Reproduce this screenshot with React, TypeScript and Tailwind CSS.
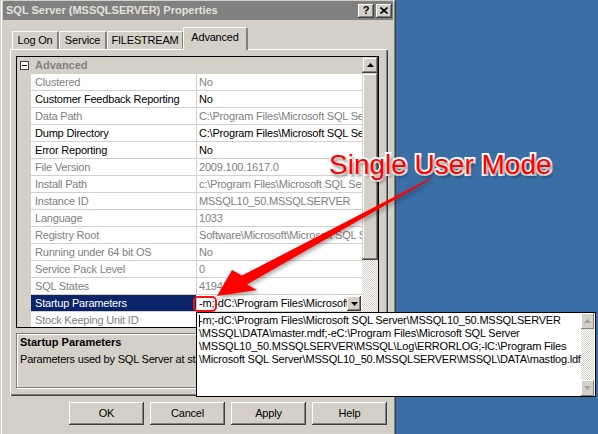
import React from 'react';

type Row = { name: string; value: string; dim?: boolean };

const rows: Row[] = [
  { name: 'Clustered', value: 'No', dim: true },
  { name: 'Customer Feedback Reporting', value: 'No' },
  { name: 'Data Path', value: String.raw`C:\Program Files\Microsoft SQL Server\MSSQL10_50.MSSQLSERVER\MSSQL\DATA`, dim: true },
  { name: 'Dump Directory', value: String.raw`C:\Program Files\Microsoft SQL Server\MSSQL10_50.MSSQLSERVER\MSSQL\LOG` },
  { name: 'Error Reporting', value: 'No' },
  { name: 'File Version', value: '2009.100.1617.0', dim: true },
  { name: 'Install Path', value: String.raw`c:\Program Files\Microsoft SQL Server\MSSQL10_50.MSSQLSERVER\MSSQL`, dim: true },
  { name: 'Instance ID', value: 'MSSQL10_50.MSSQLSERVER', dim: true },
  { name: 'Language', value: '1033', dim: true },
  { name: 'Registry Root', value: String.raw`Software\Microsoft\Microsoft SQL Server\MSSQL10_50.MSSQLSERVER`, dim: true },
  { name: 'Running under 64 bit OS', value: 'No', dim: true },
  { name: 'Service Pack Level', value: '0', dim: true },
  { name: 'SQL States', value: '41943040', dim: true },
];

const startupLines = [
  String.raw`-m;-dC:\Program Files\Microsoft SQL Server\MSSQL10_50.MSSQLSERVER`,
  String.raw`\MSSQL\DATA\master.mdf;-eC:\Program Files\Microsoft SQL Server`,
  String.raw`\MSSQL10_50.MSSQLSERVER\MSSQL\Log\ERRORLOG;-lC:\Program Files`,
  String.raw`\Microsoft SQL Server\MSSQL10_50.MSSQLSERVER\MSSQL\DATA\mastlog.ldf`,
];

const tabs = [
  { label: 'Log On', width: 'w-[47px]' },
  { label: 'Service', width: 'w-[48px]' },
  { label: 'FILESTREAM', width: 'w-[77px]' },
];

function Arrow({ up, color = '#000000' }: { up?: boolean; color?: string }) {
  return (
    <svg width="7" height="4" viewBox="0 0 7 4">
      <polygon points={up ? '3.5,0 7,4 0,4' : '0,0 7,0 3.5,4'} fill={color} />
    </svg>
  );
}

function PropertyRow({ row }: { row: Row }) {
  return (
    <div className="flex h-[17px] shrink-0">
      <div className="w-[14px] shrink-0 bg-[#d4d0c8]" />
      <div className={`w-[166px] shrink-0 border-b border-r border-[#d4d0c8] bg-white pl-[4px] leading-[16px] whitespace-nowrap overflow-hidden ${row.dim ? 'text-[#808080]' : 'text-black'}`}>
        {row.name}
      </div>
      <div className={`w-[165px] shrink-0 border-b border-[#d4d0c8] bg-white pl-[2px] leading-[16px] whitespace-nowrap overflow-hidden ${row.dim ? 'text-[#808080]' : 'text-black'}`}>
        {row.value}
      </div>
    </div>
  );
}

export default function App() {
  return (
    <div className="relative flex w-[598px] h-[434px] overflow-hidden bg-[#3a6ea5] text-[11px] tracking-[-0.2px] text-black [font-family:'Liberation_Sans',Arial,sans-serif]">
      <div className="w-[396px] h-full shrink-0 bg-[#d4d0c8] pt-[1px] px-[3px] flex flex-col shadow-[inset_-1px_0_#404040,inset_1px_1px_#d4d0c8,inset_-2px_0_#808080,inset_2px_2px_#ffffff]">
        {/* title bar */}
        <div className="h-[19px] shrink-0 bg-[#808080] flex items-center pl-[3px] pr-[1px]">
          <span className="font-bold text-[11px] tracking-normal text-[#e4e2dc] whitespace-nowrap">SQL Server (MSSQLSERVER) Properties</span>
          <div className="ml-auto flex gap-[2px]">
            <div className="w-[16px] h-[14px] bg-[#d4d0c8] flex items-center justify-center font-bold text-[11px] leading-none shadow-[inset_-1px_-1px_#404040,inset_1px_1px_#ffffff,inset_-2px_-2px_#808080,inset_2px_2px_#d4d0c8]">?</div>
            <div className="w-[16px] h-[14px] bg-[#d4d0c8] flex items-center justify-center shadow-[inset_-1px_-1px_#404040,inset_1px_1px_#ffffff,inset_-2px_-2px_#808080,inset_2px_2px_#d4d0c8]">
              <svg width="8" height="7" viewBox="0 0 8 7">
                <path d="M0.5 0.5 L7.5 6.5 M7.5 0.5 L0.5 6.5" stroke="#000" strokeWidth="1.6" />
              </svg>
            </div>
          </div>
        </div>

        {/* tabs */}
        <div className="ml-[7px] w-[378px] mt-[7px] flex flex-col">
          <div className="flex items-end h-[22px] pl-[2px]">
            {tabs.map((tab) => (
              <div key={tab.label} className={`${tab.width} h-[18px] shrink-0 border-t border-l border-white border-r-2 border-r-[#808080] rounded-t-[2px] flex items-center justify-center leading-none whitespace-nowrap`}>
                {tab.label}
              </div>
            ))}
            <div className="w-[65px] h-[23px] -mb-[1px] -ml-[1px] shrink-0 relative z-10 bg-[#d4d0c8] border-t border-l border-white border-r-2 border-r-[#808080] rounded-t-[2px] flex items-start justify-center pt-[4px] leading-none">
              Advanced
            </div>
          </div>

          {/* tab panel */}
          <div className="h-[347px] border-t border-l border-white shadow-[inset_-1px_-1px_#404040,inset_-2px_-2px_#808080] pt-[6px] pl-[5px] flex flex-col">
            {/* property grid */}
            <div className="w-[363px] h-[272px] border border-black flex overflow-hidden bg-white">
              <div className="w-[345px] flex flex-col overflow-hidden">
                <div className="flex h-[17px] shrink-0 bg-[#d4d0c8] items-center">
                  <div className="w-[14px] flex justify-center">
                    <div className="w-[9px] h-[9px] border border-[#404040] bg-white flex items-center justify-center">
                      <div className="w-[5px] h-px bg-black" />
                    </div>
                  </div>
                  <span className="pl-[4px] font-bold tracking-normal text-[#808080]">Advanced</span>
                </div>
                {rows.map((row) => (
                  <PropertyRow key={row.name} row={row} />
                ))}
                <div className="flex h-[17px] shrink-0">
                  <div className="w-[14px] shrink-0 bg-[#d4d0c8]" />
                  <div className="w-[166px] shrink-0 border-b border-r border-[#d4d0c8] bg-[#0a246a] text-white pl-[4px] leading-[16px] whitespace-nowrap">Startup Parameters</div>
                  <div className="w-[165px] shrink-0 border-b border-[#d4d0c8] bg-white flex items-start">
                    <span className="flex-1 pl-[2px] leading-[16px] whitespace-nowrap overflow-hidden">{String.raw`-m;-dC:\Program Files\Microsoft SQL Server`}</span>
                    <div className="w-[14px] h-[15px] mt-[1px] mr-[1px] shrink-0 bg-[#d4d0c8] flex items-center justify-center shadow-[inset_-1px_-1px_#404040,inset_1px_1px_#ffffff,inset_-2px_-2px_#808080,inset_2px_2px_#d4d0c8]">
                      <Arrow />
                    </div>
                  </div>
                </div>
                <PropertyRow row={{ name: 'Stock Keeping Unit ID', value: '', dim: true }} />
              </div>
              {/* scrollbar */}
              <div className="w-[16px] flex flex-col">
                <div className="h-[16px] bg-[#d4d0c8] flex items-center justify-center shadow-[inset_-1px_-1px_#404040,inset_1px_1px_#d4d0c8,inset_-2px_-2px_#808080,inset_2px_2px_#ffffff]">
                  <Arrow up />
                </div>
                <div className="h-[187px] bg-[#d4d0c8] shadow-[inset_-1px_-1px_#404040,inset_1px_1px_#d4d0c8,inset_-2px_-2px_#808080,inset_2px_2px_#ffffff]" />
                <div className="flex-1 bg-[repeating-conic-gradient(#ffffff_0_25%,#d4d0c8_0_50%)] bg-[length:2px_2px]" />
              </div>
            </div>

            {/* description */}
            <div className="mt-[5px] w-[363px] h-[55px] border border-[#808080] shadow-[1px_1px_#ffffff,inset_1px_1px_#ffffff] px-[3px] pt-[2px]">
              <div className="font-bold tracking-normal leading-[13px]">Startup Parameters</div>
              <div className="mt-[4px] leading-[13px] whitespace-nowrap">Parameters used by SQL Server at startup.</div>
            </div>
          </div>
        </div>

        {/* buttons */}
        <div className="mt-[6px] flex justify-end gap-[6px] pr-[6px]">
          {['OK', 'Cancel', 'Apply', 'Help'].map((label) => (
            <div key={label} className="w-[75px] h-[23px] bg-[#d4d0c8] flex items-center justify-center shadow-[inset_-1px_-1px_#404040,inset_1px_1px_#ffffff,inset_-2px_-2px_#808080,inset_2px_2px_#d4d0c8]">
              {label}
            </div>
          ))}
        </div>
      </div>

      {/* dropdown editor popup */}
      <div className="absolute left-[196px] top-[312px] w-[400px] h-[85px] border border-black bg-white flex">
        <div className="flex-1 pl-[2px] pt-[1px] relative">
          <div className="absolute left-[2px] top-[2px] w-px h-[12px] bg-black" />
          {startupLines.map((line) => (
            <div key={line} className="leading-[13px] whitespace-nowrap">{line}</div>
          ))}
        </div>
        <div className="w-[16px] mr-px flex flex-col">
          <div className="h-[16px] bg-[#d4d0c8] flex items-center justify-center shadow-[inset_-1px_-1px_#808080,inset_1px_1px_#ffffff]">
            <Arrow up color="#a0a0a0" />
          </div>
          <div className="flex-1 bg-[repeating-conic-gradient(#ffffff_0_25%,#d4d0c8_0_50%)] bg-[length:2px_2px]" />
          <div className="h-[16px] bg-[#d4d0c8] flex items-center justify-center shadow-[inset_-1px_-1px_#808080,inset_1px_1px_#ffffff]">
            <Arrow color="#a0a0a0" />
          </div>
        </div>
      </div>

      {/* annotation */}
      <div className="absolute left-[193px] top-[296px] w-[24px] h-[16px] border-2 border-[#ff1010] rounded-[5px]" />
      <svg className="absolute inset-0 pointer-events-none drop-shadow-[2px_2px_2px_rgba(0,0,0,0.35)]" width="598" height="434" viewBox="0 0 598 434">
        <polygon
          points="217,296 232,270 242,275.6 429.7,178.6 430.3,179.4 246.9,284.4 257,290"
          fill="#ff0000"
        />
      </svg>
      <div className="absolute left-[329px] top-[151px] text-[28px] leading-[28px] tracking-normal text-[#ff0000] whitespace-nowrap [-webkit-text-stroke:4px_#ffffff] [paint-order:stroke_fill] [text-shadow:2px_3px_3px_rgba(0,0,0,0.45)]">
        Single User Mode
      </div>
    </div>
  );
}
